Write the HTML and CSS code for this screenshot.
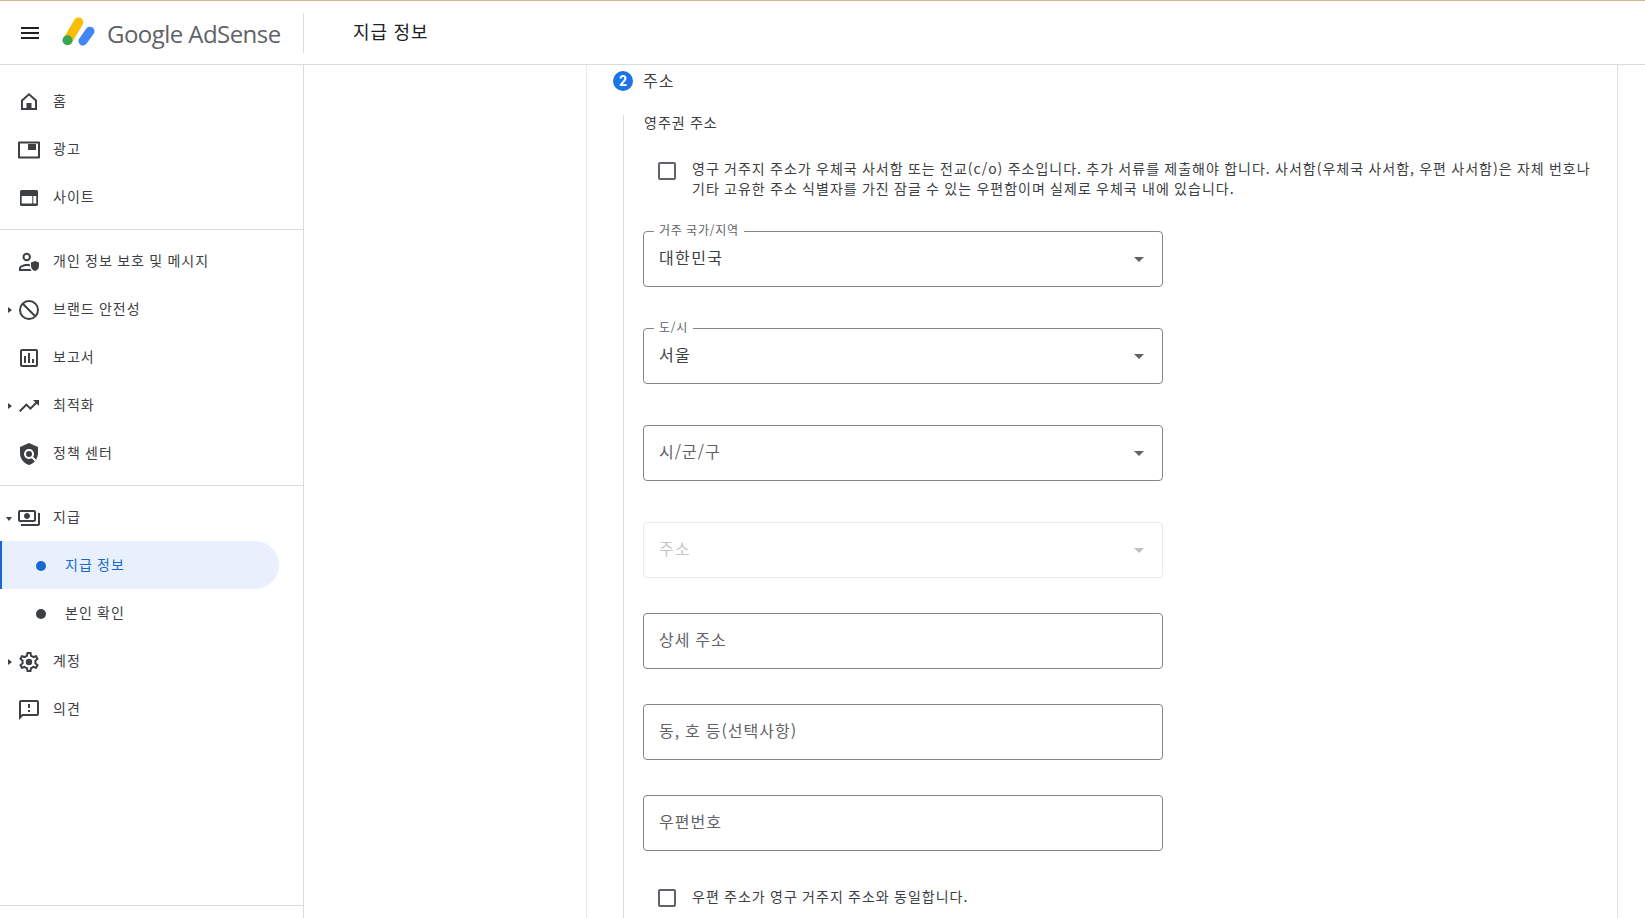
FILE: index.html
```html
<!DOCTYPE html>
<html lang="ko">
<head>
<meta charset="utf-8">
<title>지급 정보</title>
<link rel="stylesheet" href="styles.css">
</head>
<body>
<header class="topbar">
  <div class="brand">
    <button class="menu-btn" aria-label="menu"><span></span><span></span><span></span></button>
    <svg class="logo" viewBox="0 0 36 30" width="36" height="30">
      <line x1="18.500" y1="5.200" x2="8" y2="23" stroke="#fbbc04" stroke-width="9.500" stroke-linecap="round"/>
      <line x1="30" y1="14.200" x2="23" y2="24" stroke="#4285f4" stroke-width="9" stroke-linecap="round"/>
      <circle cx="7.500" cy="23.200" r="5" fill="#34a853"/>
    </svg>
    <span class="logo-text">Google AdSense</span>
  </div>
  <h1 class="page-title">지급 정보</h1>
</header>
<div class="shell">
  <nav class="sidebar">
    <div class="nav-group nav-group-first">
      <a class="nav-item"><svg class="nav-icon" viewBox="0 0 24 24"><path fill-rule="evenodd" d="M12 3L4 10v10h16V10L12 3zm0 2.600l6 5.300V18H6v-7.100l6-5.300z"/><rect x="9.500" y="13" width="5" height="6"/></svg><span>홈</span></a>
      <a class="nav-item"><svg class="nav-icon" viewBox="0 0 24 24"><path fill-rule="evenodd" d="M2 3.500h20a1 1 0 0 1 1 1v15a1 1 0 0 1-1 1H2a1 1 0 0 1-1-1v-15a1 1 0 0 1 1-1zm1 2v13h18v-13H3z"/><rect x="11" y="6" width="8" height="6"/></svg><span>광고</span></a>
      <a class="nav-item"><svg class="nav-icon" viewBox="0 0 24 24"><path fill-rule="evenodd" d="M4.500 4h15A1.500 1.500 0 0 1 21 5.500v13a1.500 1.500 0 0 1-1.500 1.500h-15A1.500 1.500 0 0 1 3 18.500v-13A1.500 1.500 0 0 1 4.500 4zM4.700 10v7.500h10.600V10H4.700zm11.600 0v7.500h3V10h-3z"/></svg><span>사이트</span></a>
    </div>
    <div class="nav-group">
      <a class="nav-item"><svg class="nav-icon" viewBox="0 0 24 24"><circle cx="9.700" cy="7" r="3.200" fill="none" stroke="#3c4043" stroke-width="2"/><path d="M2 21v-2.500c0-3 4.500-4.500 8-4.500 1.200 0 2.400.2 3 .4v2c-.8-.3-2-.4-3-.4-2.800 0-6 1-6 2.500v.500h9.500l1 2H2z"/><path d="M18 11l4 1.500v3.500c0 2.500-1.700 4.400-4 5-2.300-.6-4-2.500-4-5v-3.500z"/></svg><span>개인 정보 보호 및 메시지</span></a>
      <a class="nav-item"><i class="caret-right"></i><svg class="nav-icon" viewBox="0 0 24 24"><circle cx="12" cy="12" r="9" fill="none" stroke="#3c4043" stroke-width="2"/><line x1="5.800" y1="5.800" x2="18.200" y2="18.200" stroke="#3c4043" stroke-width="2"/></svg><span>브랜드 안전성</span></a>
      <a class="nav-item"><svg class="nav-icon" viewBox="0 0 24 24"><path d="M19 3H5c-1.100 0-2 .9-2 2v14c0 1.100.9 2 2 2h14c1.100 0 2-.9 2-2V5c0-1.100-.9-2-2-2zm0 16H5V5h14v14zM7 10h2v7H7zm4-3h2v10h-2zm4 6h2v4h-2z"/></svg><span>보고서</span></a>
      <a class="nav-item"><i class="caret-right"></i><svg class="nav-icon" viewBox="0 0 24 24"><path d="M16 6l2.290 2.290-4.880 4.880-4-4L2 16.590 3.410 18l6-6 4 4 6.300-6.290L22 12V6z"/></svg><span>최적화</span></a>
      <a class="nav-item"><svg class="nav-icon" viewBox="0 0 24 24"><path d="M21 5l-9-4-9 4v6c0 5.550 3.840 10.740 9 12 2.300-.56 4.330-1.900 5.880-3.710l-3.120-3.120c-1.940 1.290-4.580 1.070-6.290-.64-1.950-1.950-1.950-5.120 0-7.070 1.950-1.950 5.120-1.950 7.070 0 1.710 1.710 1.920 4.350.64 6.290l2.900 2.900C20.290 15.690 21 13.380 21 11V5z"/><circle cx="12" cy="12" r="3"/></svg><span>정책 센터</span></a>
    </div>
    <div class="nav-group nav-group-last">
      <a class="nav-item"><i class="caret-down"></i><svg class="nav-icon" viewBox="0 0 24 24"><path d="M19 14V6c0-1.100-.9-2-2-2H3c-1.100 0-2 .9-2 2v8c0 1.100.9 2 2 2h14c1.100 0 2-.9 2-2zm-2 0H3V6h14v8zm-7-7c-1.660 0-3 1.340-3 3s1.340 3 3 3 3-1.340 3-3-1.340-3-3-3zm13 0v11c0 1.100-.9 2-2 2H4v-2h17V7h2z"/></svg><span>지급</span></a>
      <a class="nav-sub nav-sub-active"><i class="dot"></i><span>지급 정보</span></a>
      <a class="nav-sub"><i class="dot"></i><span>본인 확인</span></a>
      <a class="nav-item"><i class="caret-right"></i><svg class="nav-icon" viewBox="0 0 24 24"><path d="M19.430 12.980c.04-.32.07-.64.07-.98 0-.34-.03-.66-.07-.98l2.110-1.650c.19-.15.24-.42.12-.64l-2-3.460c-.09-.16-.26-.25-.44-.25-.06 0-.12.01-.17.03l-2.490 1c-.52-.4-1.080-.73-1.690-.98l-.38-2.650C14.460 2.180 14.250 2 14 2h-4c-.25 0-.46.18-.49.42l-.38 2.650c-.61.25-1.170.59-1.690.98l-2.490-1c-.06-.02-.12-.03-.18-.03-.17 0-.34.09-.43.25l-2 3.460c-.13.22-.07.49.12.64l2.110 1.650c-.04.32-.07.65-.07.98 0 .33.03.66.07.98l-2.110 1.650c-.19.15-.24.42-.12.64l2 3.460c.09.16.26.25.44.25.06 0 .12-.01.17-.03l2.490-1c.52.4 1.080.73 1.690.98l.38 2.650c.03.24.24.42.49.42h4c.25 0 .46-.18.49-.42l.38-2.650c.61-.25 1.170-.59 1.690-.98l2.490 1c.06.02.12.03.18.03.17 0 .34-.09.43-.25l2-3.460c.12-.22.07-.49-.12-.64l-2.110-1.650zm-1.980-1.710c.04.31.05.52.05.73 0 .21-.02.43-.05.73l-.14 1.130.89.7 1.080.84-.7 1.210-1.270-.51-1.040-.42-.9.68c-.43.32-.84.56-1.250.73l-1.060.43-.16 1.130-.2 1.350h-1.400l-.19-1.350-.16-1.130-1.060-.43c-.43-.18-.83-.41-1.230-.71l-.91-.7-1.060.43-1.270.51-.7-1.210 1.080-.84.89-.7-.14-1.130c-.03-.31-.05-.54-.05-.74s.02-.43.05-.73l.14-1.130-.89-.7-1.080-.84.7-1.210 1.270.51 1.040.42.9-.68c.43-.32.84-.56 1.250-.73l1.060-.43.16-1.130.2-1.350h1.390l.19 1.350.16 1.130 1.060.43c.43.18.83.41 1.230.71l.91.7 1.060-.43 1.270-.51.7 1.210-1.070.85-.89.7.14 1.130z"/><circle cx="12" cy="12" r="3.200"/></svg><span>계정</span></a>
      <a class="nav-item"><svg class="nav-icon" viewBox="0 0 24 24"><path d="M20 2H4c-1.100 0-1.990.9-1.990 2L2 22l4-4h14c1.100 0 2-.9 2-2V4c0-1.100-.9-2-2-2zm0 14H5.170L4 17.170V4h16v12zm-9-4h2v2h-2zm0-6h2v4h-2z"/></svg><span>의견</span></a>
    </div>
    <div class="sidebar-foot"></div>
  </nav>
  <div class="gutter"></div>
  <main class="panel">
    <div class="step-head">
      <span class="step-num">2</span>
      <span class="step-title">주소</span>
    </div>
    <div class="step-body">
      <div class="section-label">영주권 주소</div>
      <label class="check-row check-row-notice">
        <i class="checkbox"></i>
        <span>영구 거주지 주소가 우체국 사서함 또는 전교(c/o) 주소입니다. 추가 서류를 제출해야 합니다. 사서함(우체국 사서함, 우편 사서함)은 자체 번호나<br>기타 고유한 주소 식별자를 가진 잠글 수 있는 우편함이며 실제로 우체국 내에 있습니다.</span>
      </label>
      <div class="field field-first"><span class="float-label">거주 국가/지역</span><span class="value value-filled">대한민국</span><i class="select-arrow"></i></div>
      <div class="field field-gap41"><span class="float-label">도/시</span><span class="value value-filled">서울</span><i class="select-arrow"></i></div>
      <div class="field field-gap41"><span class="value">시/군/구</span><i class="select-arrow"></i></div>
      <div class="field field-gap41 field-disabled"><span class="value">주소</span><i class="select-arrow"></i></div>
      <div class="field field-gap35"><span class="value">상세 주소</span></div>
      <div class="field field-gap35"><span class="value">동, 호 등(선택사항)</span></div>
      <div class="field field-gap35"><span class="value">우편번호</span></div>
      <label class="check-row check-row-postal">
        <i class="checkbox"></i>
        <span>우편 주소가 영구 거주지 주소와 동일합니다.</span>
      </label>
    </div>
  </main>
</div>
</body>
</html>
```

FILE: styles.css
```css
* { box-sizing: border-box; }
html, body { height: 100%; }
body {
  margin: 0;
  height: 918px;
  overflow: hidden;
  display: flex;
  flex-direction: column;
  background: #fff;
  color: #3c4043;
  font-family: "Noto Sans CJK KR", Roboto, sans-serif;
  font-size: 14px;
  letter-spacing: 1px;
  word-spacing: -0.6px;
}

/* Top bar */
.topbar {
  flex: none;
  height: 65px;
  display: flex;
  align-items: center;
  border-top: 1px solid #d4b48c;
  border-bottom: 1px solid #dadce0;
}
.brand {
  width: 304px;
  height: 40px;
  display: flex;
  align-items: center;
  padding-left: 21px;
  border-right: 1px solid #dadce0;
}
.menu-btn {
  width: 18px;
  height: 12px;
  padding: 0;
  border: 0;
  background: none;
  display: flex;
  flex-direction: column;
  justify-content: space-between;
}
.menu-btn span { display: block; height: 2px; background: #202124; }
.logo { margin: 0 0 2px 21px; flex: none; }
.logo-text {
  margin: 2px 0 0 11px;
  font-family: "Open Sans", Roboto, sans-serif;
  font-size: 24px;
  letter-spacing: -0.55px;
  word-spacing: 0;
  color: #5f6368;
  white-space: nowrap;
}
.page-title {
  margin: 0 0 4px 49px;
  font-size: 18px;
  font-weight: 400;
  color: #202124;
}

/* Shell */
.shell { flex: 1; min-height: 0; display: flex; }
.sidebar {
  flex: none;
  width: 304px;
  display: flex;
  flex-direction: column;
  border-right: 1px solid #dadce0;
}
.nav-group { padding: 7px 0 8px; border-bottom: 1px solid #dadce0; }
.nav-group-first { padding: 12px 0 8px; }
.nav-group-last { padding: 7px 0 0; border-bottom: 0; }
.nav-item, .nav-sub {
  position: relative;
  display: flex;
  align-items: center;
  height: 48px;
  white-space: nowrap;
}
.nav-item > span, .nav-sub > span { margin-bottom: 3px; }
.nav-item { padding-left: 17px; }
.nav-icon { flex: none; width: 24px; height: 24px; margin-top: 2px; margin-right: 12px; fill: #3c4043; }
.caret-right, .caret-down { position: absolute; width: 0; height: 0; border-style: solid; }
.caret-right { left: 8px; top: 22px; border-width: 3px 0 3px 4px; border-color: transparent transparent transparent #3c4043; }
.caret-down { left: 6px; top: 24px; border-width: 4px 3px 0 3px; border-color: #3c4043 transparent transparent transparent; }
.nav-sub { padding-left: 36px; width: 279px; }
.dot { width: 10px; height: 10px; margin-top: 1px; margin-right: 19px; border-radius: 50%; background: #3c4043; }
.nav-sub-active {
  color: #1967d2;
  background: #e8f0fe;
  border-left: 2px solid #1967d2;
  padding-left: 34px;
  border-radius: 0 24px 24px 0;
}
.nav-sub-active .dot { background: #1967d2; }
.sidebar-foot { margin-top: auto; height: 13px; border-top: 1px solid #dadce0; }

.gutter { flex: none; width: 283px; border-right: 1px solid #e8eaed; }

/* Form panel */
.panel {
  flex: none;
  width: 1031px;
  padding: 6px 0 0 26px;
  border-right: 1px solid #e0e0e0;
}
.step-head { display: flex; align-items: center; height: 20px; }
.step-num {
  width: 20px;
  height: 20px;
  border-radius: 50%;
  background: #1a73e8;
  color: #fff;
  font-family: Roboto, sans-serif;
  font-size: 14px;
  font-weight: 700;
  letter-spacing: 0;
  text-align: center;
  line-height: 20px;
}
.step-title { margin: -3px 0 0 10px; font-size: 16px; line-height: 20px; }
.step-body {
  margin: 24px 0 0 10px;
  padding-left: 19px;
  height: 900px;
  border-left: 1px solid #dadce0;
}
.section-label { margin-left: 1px; line-height: 14px; }
.check-row { display: flex; line-height: 20px; }
.checkbox {
  flex: none;
  width: 18px;
  height: 18px;
  margin-right: 16px;
  border: 2px solid #5f6368;
  border-radius: 2px;
}
.check-row-notice { margin-top: 29px; padding-left: 15px; white-space: nowrap; }
.check-row-notice .checkbox { margin-top: 4px; }
.check-row-postal { margin-top: 38px; padding-left: 15px; }
.check-row-postal > span { margin-top: -3px; }

.field {
  position: relative;
  width: 520px;
  height: 56px;
  padding: 0 15px;
  display: flex;
  align-items: center;
  border: 1px solid #80868b;
  border-radius: 4px;
  font-size: 16px;
}
.field-first { margin-top: 33px; }
.field-gap41 { margin-top: 41px; }
.field-gap35 { margin-top: 35px; }
.value { color: #5f6368; margin-top: -4px; }
.value-filled { color: #3c4043; letter-spacing: 1.4px; }
.float-label {
  position: absolute;
  left: 10px;
  top: -9px;
  padding: 0 5px;
  background: #fff;
  font-size: 12px;
  line-height: 14px;
  letter-spacing: 0.8px;
  word-spacing: -0.8px;
  color: #5f6368;
}
.select-arrow {
  position: absolute;
  right: 18px;
  top: 25px;
  width: 0;
  height: 0;
  border-style: solid;
  border-width: 5px 5px 0 5px;
  border-color: #5f6368 transparent transparent transparent;
}
.field-disabled { border-color: #e8eaed; }
.field-disabled .value { color: #c4c7ca; }
.field-disabled .select-arrow { border-top-color: #bdc1c6; }
```
